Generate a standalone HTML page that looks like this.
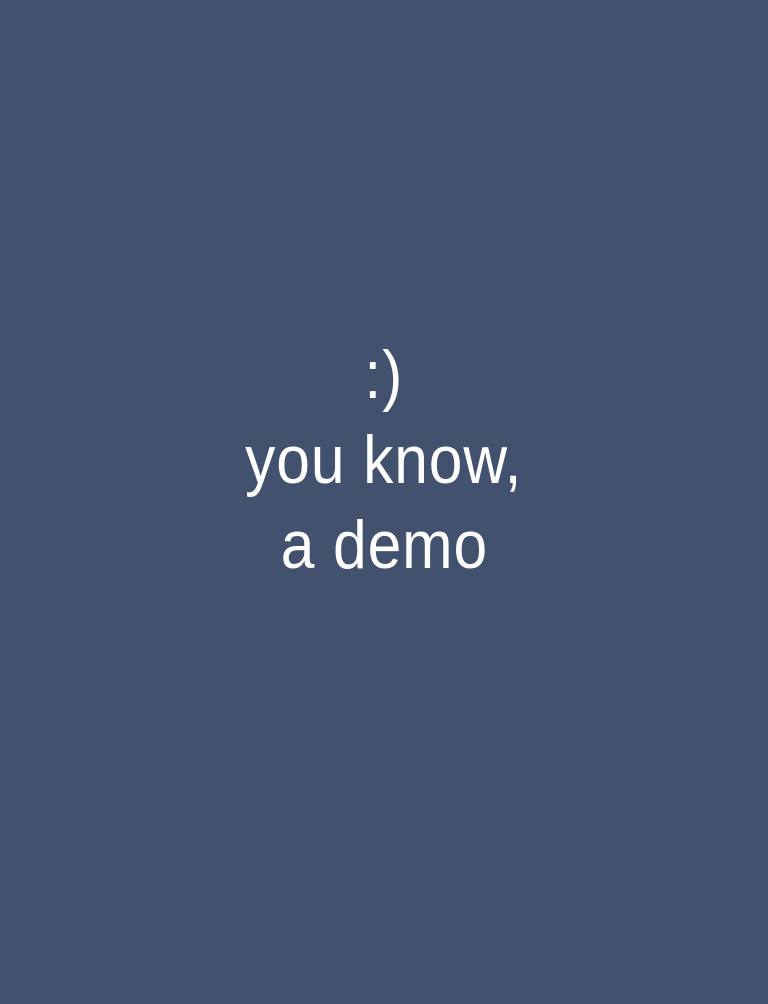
<!DOCTYPE html>
<html><head><style>
html,body{margin:0;padding:0;width:768px;height:1004px;background:#42516e;overflow:hidden}
.l{position:absolute;left:0;width:768px;text-align:center;color:#fff;font-family:"Liberation Sans",sans-serif;font-size:68px;line-height:68px;height:68px}
.l span{display:inline-block;transform:scaleX(0.89);letter-spacing:1px}
</style></head><body>
<div class="l" style="top:341px"><span>:)</span></div>
<div class="l" style="top:426px"><span>you know,</span></div>
<div class="l" style="top:511px"><span>a demo</span></div>
</body></html>
